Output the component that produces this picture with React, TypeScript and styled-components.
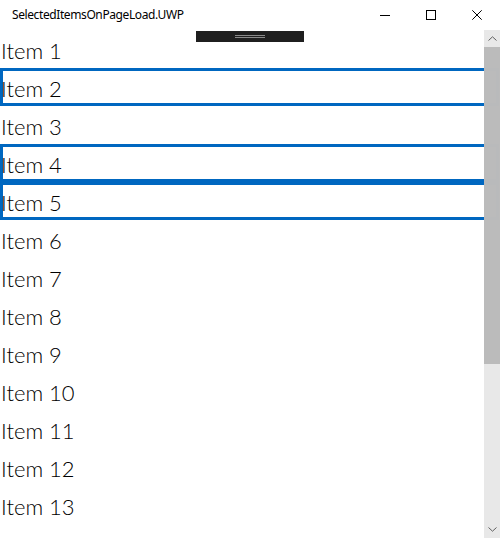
import React from "react";
import styled, { createGlobalStyle } from "styled-components";

const Global = createGlobalStyle`
  html, body { margin: 0; padding: 0; background: #ffffff; }
  body { width: 500px; height: 538px; overflow: hidden; }
  #root { width: 500px; height: 538px; }
`;

const Window = styled.div`
  position: relative;
  width: 500px;
  height: 538px;
  overflow: hidden;
  display: flex;
  flex-direction: column;
  background: #ffffff;
`;

const TitleBar = styled.div`
  height: 30px;
  flex: none;
  display: flex;
  align-items: center;
`;

const Title = styled.div`
  flex: 1;
  padding-left: 12px;
  font-family: "Segoe UI", "Noto Sans", sans-serif;
  font-size: 12px;
  letter-spacing: -0.4px;
  color: #000000;
  padding-bottom: 1px;
`;

const CaptionButton = styled.div`
  width: 46px;
  height: 30px;
  display: flex;
  align-items: center;
  justify-content: center;
`;

const Content = styled.div`
  position: relative;
  flex: 1;
  overflow: hidden;
`;

const List = styled.div`
  display: flex;
  flex-direction: column;
`;

const Row = styled.div<{ $selected?: boolean }>`
  height: 38px;
  flex: none;
  box-sizing: border-box;
  margin-right: 1px;
  padding: 5px 0 0 1px;
  line-height: 32px;
  font-family: "Segoe UI", Lato, sans-serif;
  font-weight: 300;
  font-size: 22px;
  color: #000000;
  white-space: nowrap;
  box-shadow: ${(p) => (p.$selected ? "inset 0 0 0 3px #0067c0" : "none")};
`;

const Scrollbar = styled.div`
  position: absolute;
  top: 0;
  right: 0;
  bottom: 0;
  width: 16px;
  display: flex;
  flex-direction: column;
  background: rgba(230, 230, 230, 0.92);
`;

const ScrollButton = styled.div`
  height: 17px;
  flex: none;
  display: flex;
  align-items: center;
  justify-content: center;
`;

const Thumb = styled.div`
  height: 317px;
  flex: none;
  background: rgba(182, 182, 182, 0.9);
`;

const Track = styled.div`
  flex: 1;
`;

const DebugBar = styled.div`
  position: absolute;
  top: 31px;
  left: 196px;
  width: 108px;
  height: 11px;
  background: #1f1f1f;
  display: flex;
  flex-direction: column;
  align-items: center;
  justify-content: center;
  gap: 1px;
`;

const DebugLine = styled.div`
  width: 30px;
  height: 1px;
  background: #8a8a8a;
`;

const items = Array.from({ length: 15 }, (_, i) => i + 1);
const selected = new Set([2, 4, 5]);

export default function App() {
  return (
    <>
      <Global />
      <Window>
        <TitleBar>
          <Title>SelectedItemsOnPageLoad.UWP</Title>
          <CaptionButton>
            <svg width="10" height="10" viewBox="0 0 10 10">
              <line x1="0" y1="5.5" x2="10" y2="5.5" stroke="#000" strokeWidth="1" />
            </svg>
          </CaptionButton>
          <CaptionButton>
            <svg width="10" height="10" viewBox="0 0 10 10">
              <rect x="0.5" y="0.5" width="9" height="9" fill="none" stroke="#000" strokeWidth="1" />
            </svg>
          </CaptionButton>
          <CaptionButton>
            <svg width="10" height="10" viewBox="0 0 10 10">
              <path d="M0.3 0.3 L9.7 9.7 M9.7 0.3 L0.3 9.7" stroke="#000" strokeWidth="1" fill="none" />
            </svg>
          </CaptionButton>
        </TitleBar>
        <Content>
          <List>
            {items.map((n) => (
              <Row key={n} $selected={selected.has(n)}>
                Item {n}
              </Row>
            ))}
          </List>
          <Scrollbar>
            <ScrollButton>
              <svg width="9" height="5" viewBox="0 0 9 5">
                <path d="M0.5 4.5 L4.5 0.8 L8.5 4.5" stroke="#606060" strokeWidth="1" fill="none" />
              </svg>
            </ScrollButton>
            <Thumb />
            <Track />
            <ScrollButton>
              <svg width="9" height="5" viewBox="0 0 9 5">
                <path d="M0.5 0.5 L4.5 4.2 L8.5 0.5" stroke="#606060" strokeWidth="1" fill="none" />
              </svg>
            </ScrollButton>
          </Scrollbar>
        </Content>
        <DebugBar>
          <DebugLine />
          <DebugLine />
        </DebugBar>
      </Window>
    </>
  );
}
